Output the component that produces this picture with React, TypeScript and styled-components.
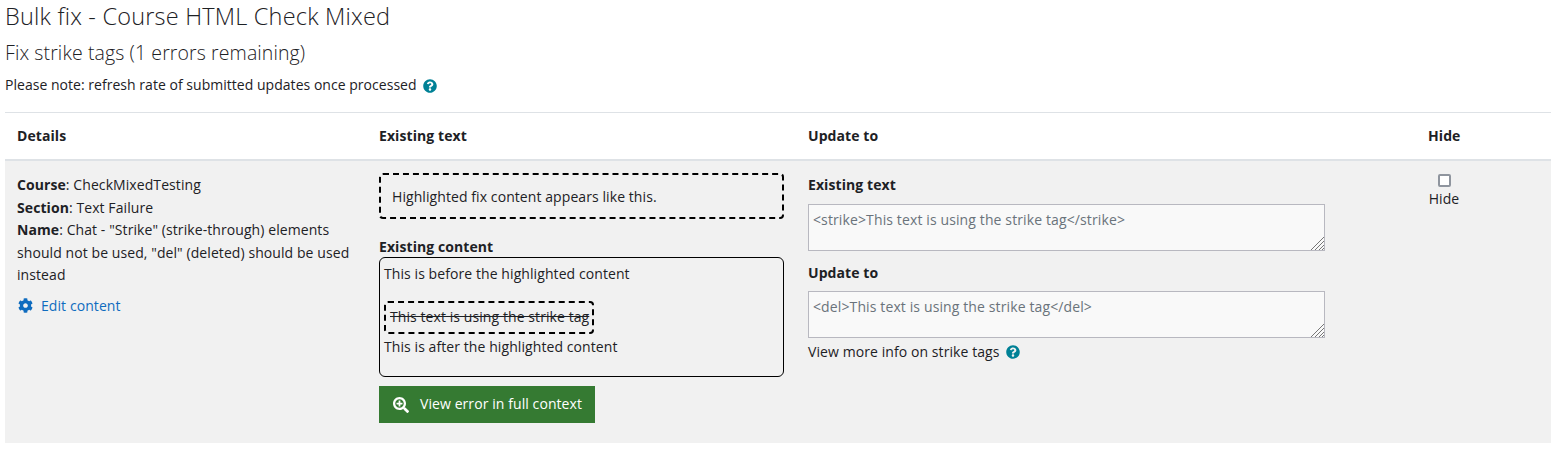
import React from 'react';
import styled, { createGlobalStyle } from 'styled-components';
import { FaCog, FaQuestionCircle, FaSearchPlus } from 'react-icons/fa';

const GlobalStyle = createGlobalStyle`
  html, body {
    margin: 0;
    background: #fff;
  }
  body {
    font-family: "Open Sans", "Liberation Sans", sans-serif;
    font-size: 14px;
    letter-spacing: 0.08px;
    line-height: 22.5px;
    color: #1d2125;
  }
`;

const Page = styled.div`
  padding: 0 5px;
`;

const Title = styled.h2`
  margin: 0;
  height: 32px;
  font-size: 23.5px;
  line-height: 32px;
  font-weight: 300;
  letter-spacing: 0.2px;
`;

const Subtitle = styled.h3`
  margin: 4px 0 0;
  height: 33px;
  font-size: 19.5px;
  line-height: 33px;
  font-weight: 300;
  letter-spacing: 0.1px;
`;

const Note = styled.p`
  margin: 5px 0 0;
  height: 23px;
  display: flex;
  align-items: center;
  letter-spacing: 0.03px;
`;

const HelpIcon = styled(FaQuestionCircle)`
  color: #008196;
  width: 14px;
  height: 14px;
  margin-left: 6px;
`;

const Table = styled.div`
  margin-top: 15px;
  display: grid;
  grid-template-columns: 362px 429px 620px 135px;
`;

const HeadCell = styled.div`
  height: 49px;
  padding: 12px 12px 0;
  box-sizing: border-box;
  border-top: 1px solid #dee2e6;
  border-bottom: 2px solid #dee2e6;
  font-weight: 700;
  line-height: 22px;
`;

const BodyCell = styled.div`
  background: #f1f1f1;
  height: 282px;
  box-sizing: border-box;
  padding: 12px 12px 0;
`;

const DetailsCell = styled(BodyCell)`
  padding-top: 13px;
`;

const DetailLine = styled.div`
  line-height: 22.5px;
`;

const EditLink = styled.a`
  display: flex;
  align-items: center;
  gap: 8px;
  margin-top: 8px;
  color: #0f6cbf;
`;

const GearIcon = styled(FaCog)`
  width: 15px;
  height: 15px;
  margin-left: 1px;
`;

const HighlightBox = styled.div`
  width: 405px;
  height: 46px;
  box-sizing: border-box;
  padding: 11px 11px;
  border: 2px dashed #000;
  border-radius: 4px;
`;

const FieldTitle = styled.div<{ $top: number }>`
  margin-top: ${props => props.$top}px;
  font-weight: 700;
  line-height: 22px;
`;

const ContentBox = styled.div`
  width: 405px;
  height: 120px;
  margin-top: -1px;
  box-sizing: border-box;
  padding: 5px 4px;
  border: 1px solid #000;
  border-radius: 6px;
`;

const ContentGap = styled.div`
  height: 15px;
`;

const StrikeBox = styled.div`
  width: 210px;
  height: 33px;
  margin-bottom: 2px;
  box-sizing: border-box;
  padding: 3px 4px;
  border: 2px dashed #000;
  border-radius: 4px;
  text-decoration: line-through;
  white-space: nowrap;
`;

const FixButton = styled.button`
  display: flex;
  align-items: center;
  gap: 11px;
  width: 216px;
  height: 37px;
  margin-top: 9px;
  padding: 0 0 0 14px;
  border: 0;
  background: #357a32;
  color: #fff;
  font: inherit;
  letter-spacing: inherit;
`;

const ZoomIcon = styled(FaSearchPlus)`
  width: 16px;
  height: 16px;
`;

const AreaWrap = styled.div<{ $top: number }>`
  position: relative;
  width: 517px;
  height: 47px;
  margin-top: ${props => props.$top}px;
`;

const CodeArea = styled.textarea`
  display: block;
  width: 100%;
  height: 100%;
  box-sizing: border-box;
  padding: 4px 4px;
  border: 1px solid #b8b8c0;
  border-radius: 0;
  background: #f9f9f9;
  color: #6a737b;
  font: inherit;
  letter-spacing: 0.12px;
  resize: none;
  outline: none;
`;

// stands in for the browser's textarea resize handle
const Grip = styled.svg`
  position: absolute;
  right: 1px;
  bottom: 1px;
  width: 13px;
  height: 13px;
  stroke: #777;
  stroke-width: 1;
`;

const MoreInfo = styled.div`
  display: flex;
  align-items: center;
  margin-top: 3px;
`;

const HideLabel = styled.label`
  display: flex;
  flex-direction: column;
  align-items: center;
  width: 32px;
`;

const HideBox = styled.span`
  display: block;
  width: 13px;
  height: 13px;
  margin: 1px 0 1px;
  box-sizing: border-box;
  border: 2px solid #8f959e;
  border-radius: 2px;
  background: #fff;
`;

const ResizeGrip = () => (
  <Grip viewBox="0 0 13 13">
    <line x1="0" y1="13" x2="13" y2="0" />
    <line x1="4" y1="13" x2="13" y2="4" />
    <line x1="8" y1="13" x2="13" y2="8" />
    <line x1="11" y1="13" x2="13" y2="11" />
  </Grip>
);

const App = () => {
  return (
    <Page>
      <GlobalStyle />
      <Title>Bulk fix - Course HTML Check Mixed</Title>
      <Subtitle>Fix strike tags (1 errors remaining)</Subtitle>
      <Note>
        Please note: refresh rate of submitted updates once processed
        <HelpIcon />
      </Note>
      <Table>
        <HeadCell>Details</HeadCell>
        <HeadCell>Existing text</HeadCell>
        <HeadCell>Update to</HeadCell>
        <HeadCell>Hide</HeadCell>

        <DetailsCell>
          <DetailLine><b>Course</b>: CheckMixedTesting</DetailLine>
          <DetailLine><b>Section</b>: Text Failure</DetailLine>
          <DetailLine>
            <b>Name</b>: Chat - "Strike" (strike-through) elements should not be used, "del" (deleted) should be used instead
          </DetailLine>
          <EditLink><GearIcon />Edit content</EditLink>
        </DetailsCell>

        <BodyCell>
          <HighlightBox>Highlighted fix content appears like this.</HighlightBox>
          <FieldTitle $top={17}>Existing content</FieldTitle>
          <ContentBox>
            This is before the highlighted content
            <ContentGap />
            <StrikeBox>This text is using the strike tag</StrikeBox>
            This is after the highlighted content
          </ContentBox>
          <FixButton><ZoomIcon />View error in full context</FixButton>
        </BodyCell>

        <BodyCell>
          <FieldTitle $top={1}>Existing text</FieldTitle>
          <AreaWrap $top={8}>
            <CodeArea readOnly value="<strike>This text is using the strike tag</strike>" />
            <ResizeGrip />
          </AreaWrap>
          <FieldTitle $top={11}>Update to</FieldTitle>
          <AreaWrap $top={7}>
            <CodeArea readOnly value="<del>This text is using the strike tag</del>" />
            <ResizeGrip />
          </AreaWrap>
          <MoreInfo>View more info on strike tags<HelpIcon /></MoreInfo>
        </BodyCell>

        <BodyCell>
          <HideLabel>
            <HideBox />
            Hide
          </HideLabel>
        </BodyCell>
      </Table>
    </Page>
  );
};

export default App;
